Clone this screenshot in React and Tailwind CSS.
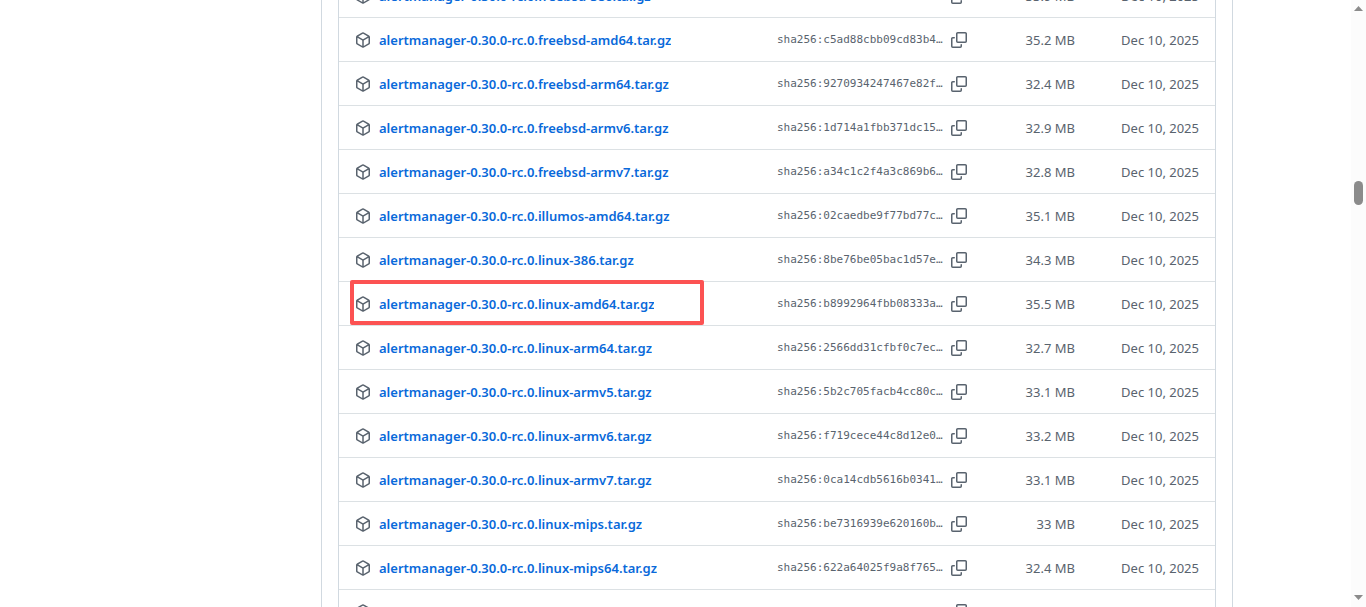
const ASSETS = [
  { target: "freebsd-386", digest: "", size: "33.9 MB" },
  { target: "freebsd-amd64", digest: "c5ad88cbb09cd83b4", size: "35.2 MB" },
  { target: "freebsd-arm64", digest: "9270934247467e82f", size: "32.4 MB" },
  { target: "freebsd-armv6", digest: "1d714a1fbb371dc15", size: "32.9 MB" },
  { target: "freebsd-armv7", digest: "a34c1c2f4a3c869b6", size: "32.8 MB" },
  { target: "illumos-amd64", digest: "02caedbe9f77bd77c", size: "35.1 MB" },
  { target: "linux-386", digest: "8be76be05bac1d57e", size: "34.3 MB" },
  { target: "linux-amd64", digest: "b8992964fbb08333a", size: "35.5 MB", highlighted: true },
  { target: "linux-arm64", digest: "2566dd31cfbf0c7ec", size: "32.7 MB" },
  { target: "linux-armv5", digest: "5b2c705facb4cc80c", size: "33.1 MB" },
  { target: "linux-armv6", digest: "f719cece44c8d12e0", size: "33.2 MB" },
  { target: "linux-armv7", digest: "0ca14cdb5616b0341", size: "33.1 MB" },
  { target: "linux-mips", digest: "be7316939e620160b", size: "33 MB" },
  { target: "linux-mips64", digest: "622a64025f9a8f765", size: "32.4 MB" },
  { target: "linux-mips64le", digest: "", size: "32.1 MB" },
];

function PackageIcon() {
  return (
    <svg viewBox="0 0 16 16" className="size-4 shrink-0 fill-[#59636e]" aria-hidden="true">
      <path d="m8.878.392 5.25 3.045c.54.314.872.89.872 1.514v6.098a1.75 1.75 0 0 1-.872 1.514l-5.25 3.045a1.75 1.75 0 0 1-1.756 0l-5.25-3.045A1.75 1.75 0 0 1 1 11.049V4.951c0-.624.332-1.201.872-1.514L7.122.392a1.75 1.75 0 0 1 1.756 0ZM7.875 1.69l-4.63 2.685L8 7.133l4.755-2.758-4.63-2.685a.248.248 0 0 0-.25 0ZM2.5 5.677v5.372c0 .09.047.171.125.216l4.625 2.683V8.432Zm6.25 8.271 4.625-2.683a.25.25 0 0 0 .125-.216V5.677L8.75 8.432Z" />
    </svg>
  );
}

function CopyIcon() {
  return (
    <svg viewBox="0 0 16 16" className="size-4 fill-[#59636e]" aria-hidden="true">
      <path d="M0 6.75C0 5.784.784 5 1.75 5h1.5a.75.75 0 0 1 0 1.5h-1.5a.25.25 0 0 0-.25.25v7.5c0 .138.112.25.25.25h7.5a.25.25 0 0 0 .25-.25v-1.5a.75.75 0 0 1 1.5 0v1.5A1.75 1.75 0 0 1 9.25 16h-7.5A1.75 1.75 0 0 1 0 14.25Z" />
      <path d="M5 1.75C5 .784 5.784 0 6.75 0h7.5C15.216 0 16 .784 16 1.75v7.5A1.75 1.75 0 0 1 14.25 11h-7.5A1.75 1.75 0 0 1 5 9.25Zm1.75-.25a.25.25 0 0 0-.25.25v7.5c0 .138.112.25.25.25h7.5a.25.25 0 0 0 .25-.25v-7.5a.25.25 0 0 0-.25-.25Z" />
    </svg>
  );
}

function AssetRow({ asset }) {
  const name = `alertmanager-0.30.0-rc.0.${asset.target}.tar.gz`;
  const cell = "h-11 border-t border-[#dce1e4] p-0 align-middle";
  return (
    <tr>
      <td className={`${cell} relative pl-4`}>
        <div className="flex items-center gap-2">
          <PackageIcon />
          <a href="#download" className="truncate font-semibold text-[#0969da] hover:underline">
            {name}
          </a>
        </div>
        {asset.highlighted && (
          <span className="pointer-events-none absolute -top-0.5 left-[11px] h-[45px] w-[354px] rounded-xs border-4 border-[#fc5252]" />
        )}
      </td>
      <td className={cell}>
        <div className="flex items-center gap-2">
          <span className="w-[166px] font-['DejaVu_Sans_Mono',monospace] text-[11px] leading-4">
            sha256:{asset.digest}…
          </span>
          <button type="button" aria-label={`Copy digest of ${name}`} className="cursor-pointer">
            <CopyIcon />
          </button>
        </div>
      </td>
      <td className={`${cell} text-right`}>{asset.size}</td>
      <td className={`${cell} pr-4 text-right`}>Dec 10, 2025</td>
    </tr>
  );
}

function ScrollTrack() {
  return (
    <div className="flex w-[15px] shrink-0 flex-col items-center bg-[#fcfcfc] pt-1.5 pb-[7px]" aria-hidden="true">
      <svg viewBox="0 0 9 5" className="h-[5px] w-[9px] fill-[#8b8b8b]">
        <path d="M4.5 0 9 5H0Z" />
      </svg>
      <div className="mt-[170px] h-6 w-[9px] rounded-full bg-[#8b8b8b]" />
      <svg viewBox="0 0 9 5" className="mt-auto h-[5px] w-[9px] fill-[#8b8b8b]">
        <path d="M0 0h9L4.5 5Z" />
      </svg>
    </div>
  );
}

export default function App() {
  return (
    <div className="flex h-screen overflow-hidden bg-white font-['Noto_Sans','Open_Sans',sans-serif] text-[13px] leading-5 text-[#59636e]">
      <main className="flex min-w-0 flex-1 pr-[118px] pl-[321px]">
        <section className="min-w-0 flex-1 border-x border-[#d1d9e0] px-4">
          <div className="-mt-[27px] border-x border-[#d1d9e0]">
            <table className="w-full table-fixed border-separate border-spacing-0" aria-label="Release assets">
              <colgroup>
                <col />
                <col className="w-[190px]" />
                <col className="w-[108px]" />
                <col className="w-[140px]" />
              </colgroup>
              <tbody>
                {ASSETS.map((asset) => (
                  <AssetRow key={asset.target} asset={asset} />
                ))}
              </tbody>
            </table>
          </div>
        </section>
      </main>
      <ScrollTrack />
    </div>
  );
}
